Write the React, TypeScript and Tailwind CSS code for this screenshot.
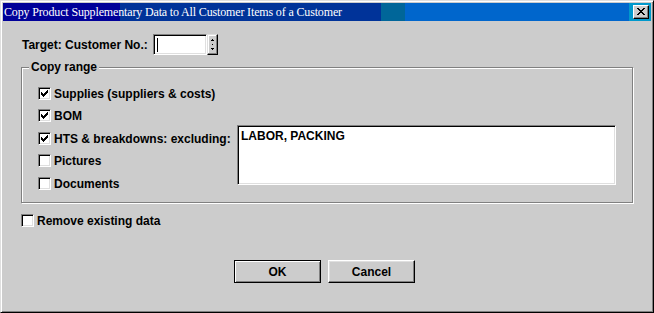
const sans = "font-['Liberation_Sans',Arial,sans-serif]";

const CHECK_ROWS: [number, number, number][] = [
  [1, 7, 7],
  [2, 6, 7],
  [3, 1, 1],
  [3, 5, 7],
  [4, 1, 2],
  [4, 4, 6],
  [5, 1, 5],
  [6, 2, 4],
  [7, 3, 3],
];

const CLOSE_ROWS: [number, number, number][] = [
  [0, 0, 1],
  [0, 6, 7],
  [1, 1, 2],
  [1, 5, 6],
  [2, 2, 5],
  [3, 3, 4],
  [4, 2, 5],
  [5, 1, 2],
  [5, 5, 6],
  [6, 0, 1],
  [6, 6, 7],
];

function PixelGlyph({ rows, w, h }: { rows: [number, number, number][]; w: number; h: number }) {
  return (
    <svg width={w} height={h} viewBox={`0 0 ${w} ${h}`} shapeRendering="crispEdges">
      {rows.map(([y, x1, x2], i) => (
        <rect key={i} x={x1} y={y} width={x2 - x1 + 1} height={1} fill="#000" />
      ))}
    </svg>
  );
}

function Checkbox({ checked }: { checked?: boolean }) {
  return (
    <div className="w-[13px] h-[13px] shrink-0 bg-white border border-t-[#808080] border-l-[#808080] border-r-white border-b-white shadow-[inset_1px_1px_0_#000,inset_-1px_-1px_0_#dfdfdf] flex items-center justify-center">
      {checked && <PixelGlyph rows={CHECK_ROWS} w={9} h={9} />}
    </div>
  );
}

function CheckRow({ label, checked, className }: { label: string; checked?: boolean; className?: string }) {
  return (
    <div className={`flex items-center gap-[3px] h-[13px] ${className ?? ""}`}>
      <Checkbox checked={checked} />
      <span className="text-[12px] font-bold leading-none text-black whitespace-nowrap">{label}</span>
    </div>
  );
}

const ranges = [
  { label: "Supplies (suppliers & costs)", checked: true, gap: "" },
  { label: "BOM", checked: true, gap: "mt-[9px]" },
  { label: "HTS & breakdowns: excluding:", checked: true, gap: "mt-[10px]" },
  { label: "Pictures", checked: false, gap: "mt-[9px]" },
  { label: "Documents", checked: false, gap: "mt-[10px]" },
];

export default function App() {
  return (
    <div className={`w-[654px] h-[313px] bg-[#cccccc] border border-t-[#dfdfdf] border-l-[#dfdfdf] border-r-black border-b-black shadow-[inset_1px_1px_0_#ffffff,inset_-1px_-1px_0_#808080] p-[2px] flex flex-col ${sans}`}>
      {/* title bar */}
      <div className="h-[18px] shrink-0 flex items-center justify-between bg-[linear-gradient(to_right,#000099_0px,#000099_117px,#003399_117px,#003399_378px,#006699_378px,#006699_402px,#0066cc_402px,#0066cc_626px,#0099cc_626px,#0099cc_100%)]">
        <span className="pl-[1px] text-white text-[12px] leading-none tracking-[-0.15px] font-['Liberation_Serif','Times_New_Roman',serif] whitespace-nowrap">
          Copy Product Supplementary Data to All Customer Items of a Customer
        </span>
        <div className="mr-[2px] mb-[1px] w-[16px] h-[14px] bg-[#cccccc] border border-t-white border-l-white border-r-black border-b-black shadow-[inset_-1px_-1px_0_#808080] flex items-center justify-center">
          <PixelGlyph rows={CLOSE_ROWS} w={8} h={7} />
        </div>
      </div>

      <div className="flex flex-col pl-[18px]">
        {/* target customer */}
        <div className="mt-[13px] h-[21px] flex items-center">
          <span className="ml-[1px] w-[131px] text-[12px] font-bold leading-none text-black whitespace-nowrap">Target: Customer No.:</span>
          <div className="w-[54px] h-[21px] bg-white border border-t-[#808080] border-l-[#808080] border-r-white border-b-white shadow-[inset_1px_1px_0_#000,inset_-1px_-1px_0_#dfdfdf] flex items-center">
            <div className="ml-[3px] w-[1px] h-[14px] bg-black" />
          </div>
          <div className="w-[11px] h-[21px] bg-[#cccccc] border border-t-[#dfdfdf] border-l-[#dfdfdf] border-r-black border-b-black shadow-[inset_-1px_-1px_0_#808080,inset_1px_1px_0_#ffffff]">
            <svg width="9" height="19" viewBox="0 0 9 19" shapeRendering="crispEdges">
              <rect x="4" y="4" width="1" height="1" fill="#000" />
              <rect x="3" y="5" width="3" height="1" fill="#000" />
              <rect x="4" y="9" width="1" height="1" fill="#000" />
              <rect x="3" y="13" width="3" height="1" fill="#000" />
              <rect x="4" y="14" width="1" height="1" fill="#000" />
            </svg>
          </div>
        </div>

        {/* copy range group */}
        <div className="relative mt-[12px] w-[612px] h-[136px] border border-[#808080] shadow-[inset_1px_1px_0_#ffffff,1px_1px_0_#ffffff]">
          <span className="absolute left-[7px] -top-[8px] px-[2px] bg-[#cccccc] text-[12px] font-bold leading-[14px] text-black">
            Copy range
          </span>
          <div className="flex pl-[16px] pt-[19px]">
            <div className="w-[199px] flex flex-col">
              {ranges.map((r) => (
                <CheckRow key={r.label} label={r.label} checked={r.checked} className={r.gap} />
              ))}
            </div>
            <div className="mt-[38px] w-[379px] h-[60px] bg-white border border-t-[#808080] border-l-[#808080] border-r-white border-b-white shadow-[inset_1px_1px_0_#000,inset_-1px_-1px_0_#dfdfdf] px-[3px] pt-[4px] leading-none">
              <span className="block text-[12px] font-bold leading-none text-black">LABOR, PACKING</span>
            </div>
          </div>
        </div>

        <CheckRow label="Remove existing data" className="mt-[11px]" />

        {/* buttons */}
        <div className="mt-[33px] ml-[213px] flex gap-[7px]">
          <button className="w-[87px] h-[23px] bg-[#cccccc] border border-black shadow-[inset_1px_1px_0_#ffffff,inset_-1px_-1px_0_#808080] text-[12px] font-bold text-black leading-none">
            OK
          </button>
          <button className="w-[87px] h-[23px] bg-[#cccccc] border border-t-white border-l-white border-r-black border-b-black shadow-[inset_-1px_-1px_0_#808080,inset_1px_1px_0_#dfdfdf] text-[12px] font-bold text-black leading-none">
            Cancel
          </button>
        </div>
      </div>
    </div>
  );
}
